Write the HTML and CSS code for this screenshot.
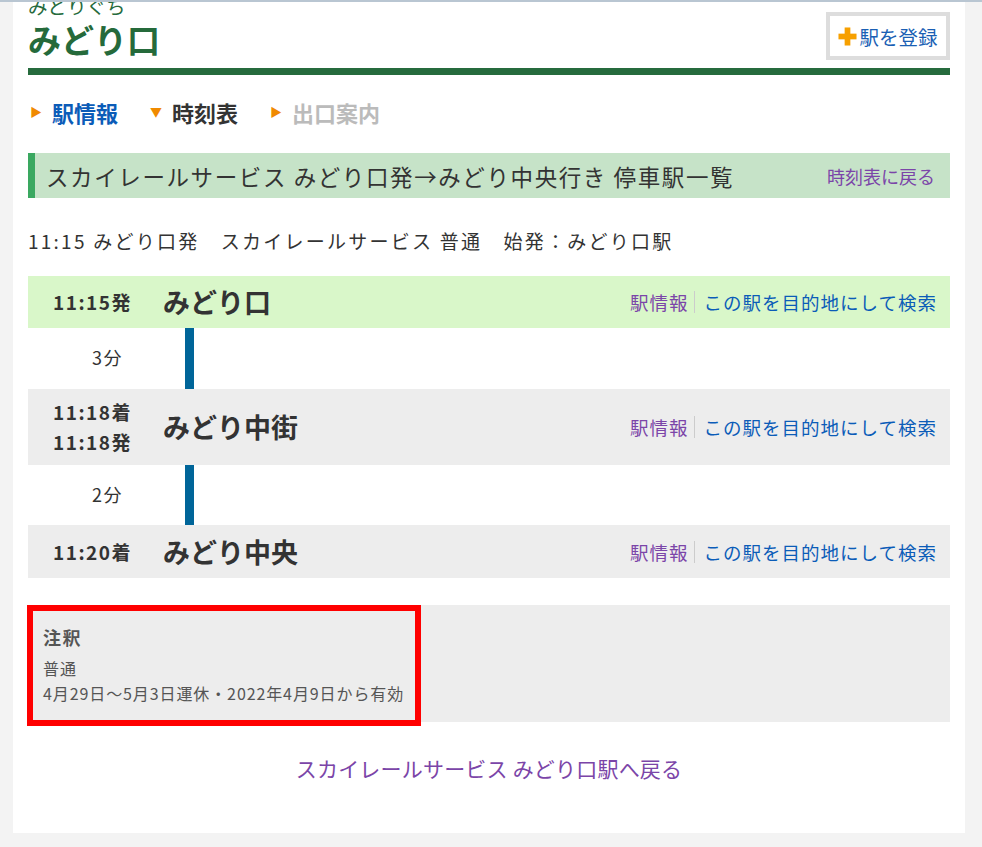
FILE: index.html
```html
<!DOCTYPE html>
<html lang="ja">
<head>
<meta charset="utf-8">
<link rel="stylesheet" href="styles.css">
</head>
<body>
<div class="page">
  <div class="sheet">
    <header class="st-head">
      <div class="st-names">
        <div class="kana">みどりぐち</div>
        <h1 class="st-name">みどり口</h1>
      </div>
      <a class="reg-btn" href="#"><svg class="plus" viewBox="0 0 20 20" width="19" height="19"><rect x="7" y="0.5" width="6" height="19" fill="#f7a000"/><rect x="0.5" y="7" width="19" height="6" fill="#f7a000"/></svg>駅を登録</a>
    </header>
    <div class="green-rule"></div>
    <nav class="tabs">
      <a class="tab tab-link" href="#"><span class="arr">&#9654;</span>駅情報</a>
      <span class="tab tab-cur"><span class="arr">&#9660;</span>時刻表</span>
      <span class="tab tab-off"><span class="arr">&#9654;</span>出口案内</span>
    </nav>
    <div class="sec-head">
      <h2 class="sec-title">スカイレールサービス みどり口発→みどり中央行き 停車駅一覧</h2>
      <a class="back-link" href="#">時刻表に戻る</a>
    </div>
    <p class="train-info">11:15 みどり口発　スカイレールサービス 普通　始発：みどり口駅</p>
    <div class="stops">
      <div class="stop stop-first">
        <div class="times"><div>11:15発</div></div>
        <div class="stop-name">みどり口</div>
        <div class="stop-links"><a class="lk-info" href="#">駅情報</a><span class="sep"></span><a class="lk-search" href="#">この駅を目的地にして検索</a></div>
      </div>
      <div class="leg"><div class="leg-min">3分</div><div class="leg-line"></div></div>
      <div class="stop stop-mid">
        <div class="times"><div>11:18着</div><div>11:18発</div></div>
        <div class="stop-name">みどり中街</div>
        <div class="stop-links"><a class="lk-info" href="#">駅情報</a><span class="sep"></span><a class="lk-search" href="#">この駅を目的地にして検索</a></div>
      </div>
      <div class="leg"><div class="leg-min">2分</div><div class="leg-line"></div></div>
      <div class="stop stop-last">
        <div class="times"><div>11:20着</div></div>
        <div class="stop-name">みどり中央</div>
        <div class="stop-links"><a class="lk-info" href="#">駅情報</a><span class="sep"></span><a class="lk-search" href="#">この駅を目的地にして検索</a></div>
      </div>
    </div>
    <div class="notes">
      <div class="notes-inner">
        <div class="notes-title">注釈</div>
        <div class="notes-line">普通</div>
        <div class="notes-line">4月29日～5月3日運休・2022年4月9日から有効</div>
      </div>
    </div>
    <div class="foot"><a class="foot-link" href="#">スカイレールサービス みどり口駅へ戻る</a></div>
  </div>
</div>
</body>
</html>
```
FILE: styles.css
```css
* { box-sizing: border-box; }
html, body { margin: 0; padding: 0; }
body {
  background: #f3f3f3;
  font-family: "Noto Sans CJK JP", "Noto Sans", sans-serif;
  color: #333;
  border-top: 2px solid #b9c6d2;
  height: 847px;
  overflow: hidden;
}
a { text-decoration: none; }
.page { padding: 0 17px 0 13px; }
.sheet {
  background: #fff;
  padding: 0 15px 0 15px;
  height: 833px;
  margin-top: -2px;
}
.st-head {
  display: flex;
  justify-content: space-between;
  align-items: flex-start;
  height: 68px;
}
.kana {
  font-size: 19.5px;
  line-height: 18px;
  color: #266b3d;
  margin-top: -3px;
}
.st-name {
  margin: 4px 0 0 0;
  font-size: 33px;
  line-height: 40px;
  font-weight: bold;
  color: #256a3b;
}
.reg-btn {
  margin-top: 12px;
  border: 4px solid #dddddd;
  height: 48px;
  width: 124px;
  display: flex;
  align-items: center;
  justify-content: center;
  font-size: 19.5px;
  color: #1a5fb4;
  gap: 2px;
}
.plus { flex: none; }
.green-rule { height: 7px; background: #266b3d; }
.tabs {
  display: flex;
  align-items: flex-start;
  gap: 32px;
  padding: 22px 0 0 2px;
  height: 78px;
}
.tab {
  font-size: 22px;
  line-height: 30px;
  font-weight: bold;
  display: flex;
  align-items: center;
}
.arr { color: #f08a00; font-size: 12px; margin-right: 10px; }
.tab-link { color: #0b5cb8; }
.tab-cur { color: #333; }
.tab-off { color: #bbbbbb; }
.sec-head {
  height: 45px;
  background: #c6e3c8;
  border-left: 7px solid #3aa860;
  display: flex;
  align-items: center;
  justify-content: space-between;
  padding: 0 15px 0 11px;
}
.sec-title {
  margin: 0;
  font-size: 22.5px;
  letter-spacing: 1.6px;
  font-weight: normal;
  color: #333;
  line-height: 30px;
}
.back-link { font-size: 18px; color: #7b45a8; }
.train-info {
  margin: 0;
  height: 78px;
  padding-top: 29px;
  font-size: 19px;
  letter-spacing: 2.25px;
  line-height: 28px;
  color: #333;
}
.stop {
  display: flex;
  align-items: center;
}
.stop-first { background: #d9f7c9; height: 52px; }
.stop-mid { background: #ededed; height: 76px; }
.stop-last { background: #ededed; height: 53px; }
.times {
  width: 135px;
  padding-left: 25px;
  font-size: 19px;
  letter-spacing: 1.5px;
  font-weight: bold;
  line-height: 30px;
  color: #333;
}
.stop-name {
  flex: 1;
  font-size: 27px;
  font-weight: bold;
  color: #333;
  line-height: 34px;
}
.stop-links {
  display: flex;
  align-items: center;
  padding-right: 14px;
  font-size: 18.5px;
  letter-spacing: 1px;
}
.lk-info { color: #7b45a8; }
.lk-search { color: #0b5cb8; margin-right: -1px; }
.sep { width: 1px; height: 22px; background: #cccccc; margin: 0 9px 0 5px; }
.leg { display: flex; height: 61px; }
.stop-mid + .leg { height: 60px; }
.leg-min {
  width: 157px;
  padding-left: 64px;
  font-size: 18px;
  letter-spacing: 1.5px;
  line-height: 58px;
  color: #333;
}
.leg-line { width: 9px; background: #006599; }
.notes {
  margin-top: 30px;
  background: #ededed;
  height: 117px;
}
.notes-inner {
  width: 394px;
  height: 121px;
  margin: -3px 0 0 -1px;
  border: 6px solid #ff0000;
  padding: 13px 0 0 10px;
  white-space: nowrap;
}
.notes-title {
  font-size: 18px;
  letter-spacing: 1.5px;
  font-weight: bold;
  color: #555;
  line-height: 26px;
  margin-bottom: 6px;
}
.notes-line {
  font-size: 16px;
  letter-spacing: 0.9px;
  color: #555;
  line-height: 25px;
}
.foot {
  text-align: center;
  padding-top: 31px;
}
.foot-link { font-size: 21px; letter-spacing: 0.2px; color: #7b45a8; line-height: 30px; }
```
